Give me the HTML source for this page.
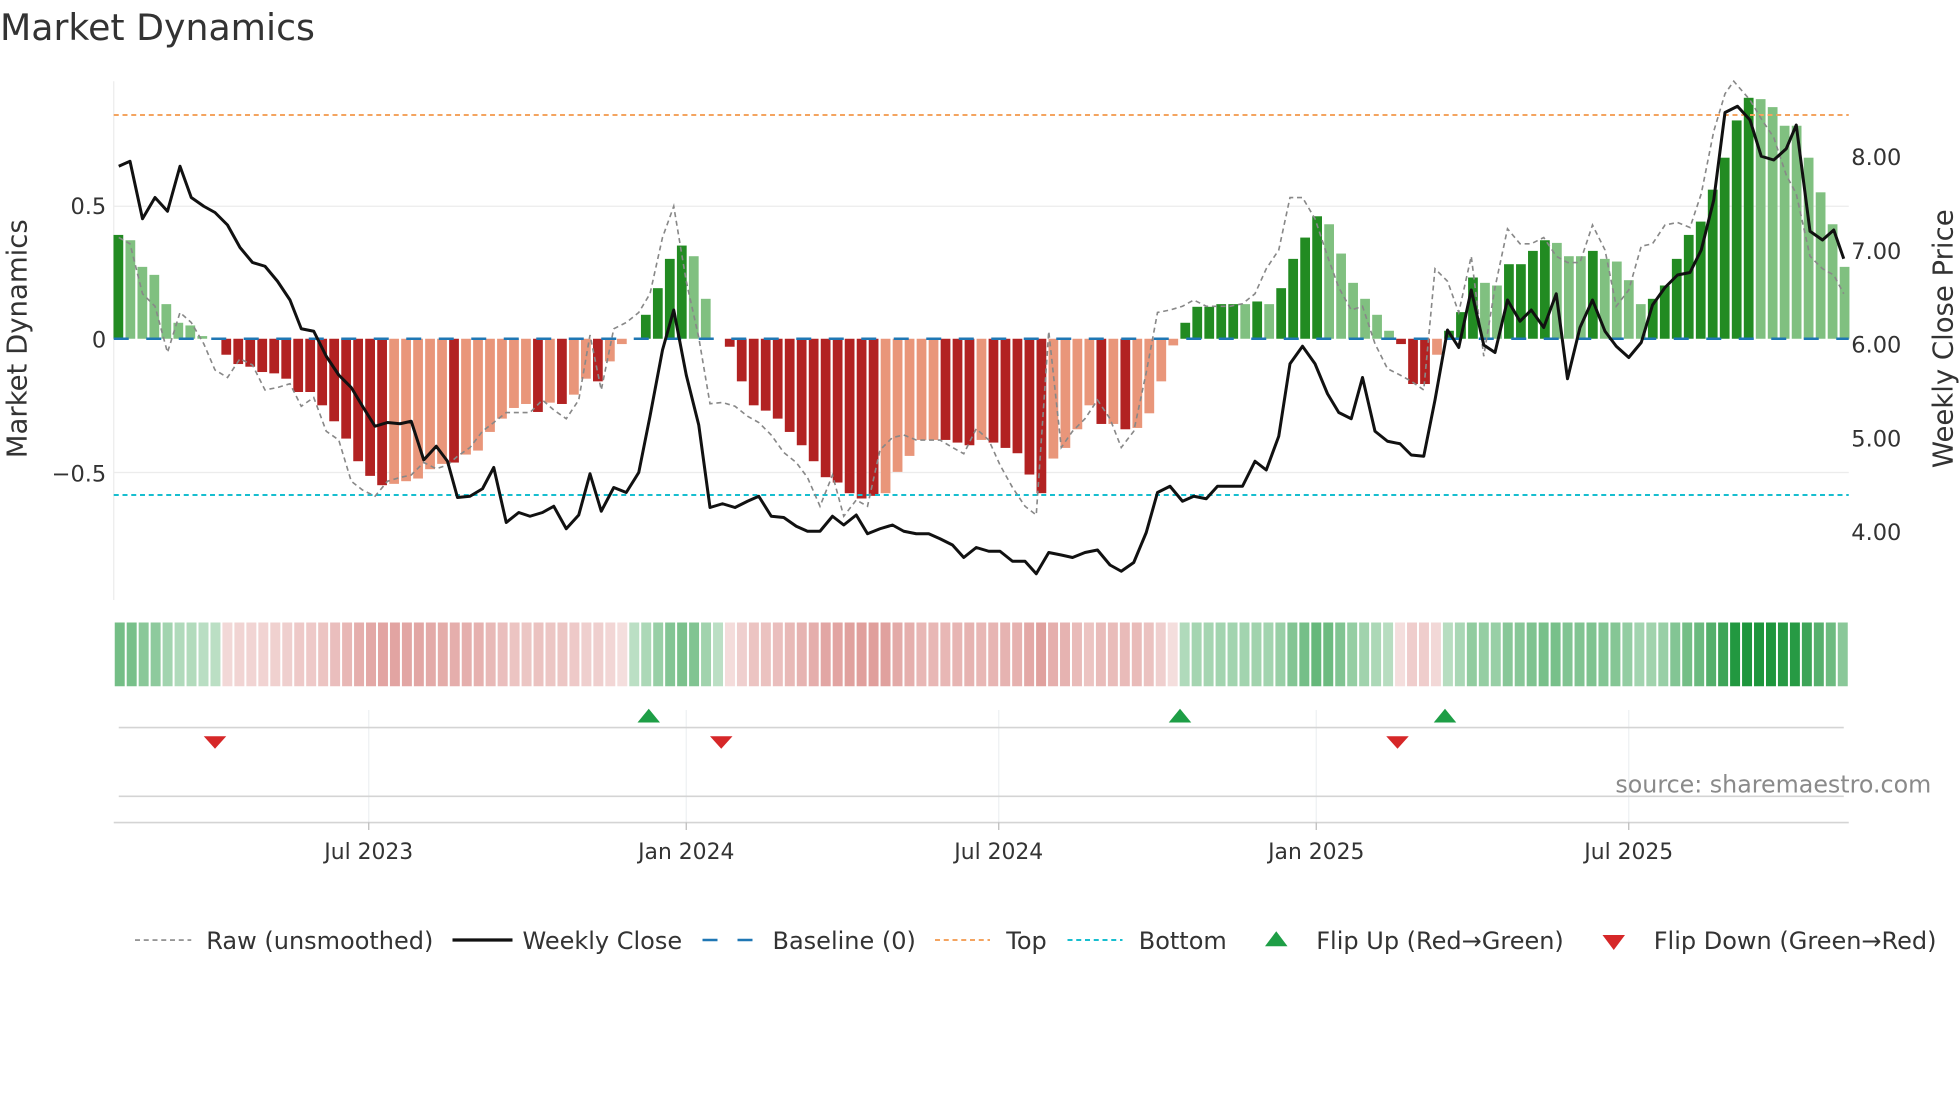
<!DOCTYPE html>
<html><head><meta charset="utf-8"><style>
html,body{margin:0;padding:0;background:#fff;width:1960px;height:1102px;overflow:hidden}
svg{display:block}
text{font-family:"DejaVu Sans","Liberation Sans",sans-serif;fill:#333}
</style></head><body>
<svg id="s" width="1960" height="1102" viewBox="0 0 1568 881.6" xmlns="http://www.w3.org/2000/svg">
<text x="0" y="32" font-size="29">Market Dynamics</text>
<line x1="91" y1="65" x2="91" y2="480" stroke="#ebebeb" stroke-width="1"/>
<line x1="91" y1="165" x2="1479" y2="165" stroke="#ececec" stroke-width="1"/>
<line x1="91" y1="378" x2="1479" y2="378" stroke="#ececec" stroke-width="1"/>
<g id="bars"></g>
<line x1="91" y1="271" x2="1479" y2="271" stroke="#1f77b4" stroke-width="2" stroke-dasharray="12,14"/>
<line x1="91" y1="92" x2="1479" y2="92" stroke="#f4a460" stroke-width="1.6" stroke-dasharray="4,3"/>
<line x1="91" y1="396" x2="1479" y2="396" stroke="#17becf" stroke-width="1.6" stroke-dasharray="4,3"/>
<polyline id="raw" fill="none" stroke="#888" stroke-width="1.3" stroke-dasharray="4,3"/>
<polyline id="px" fill="none" stroke="#111" stroke-width="2.4" stroke-linejoin="round"/>
<g font-size="18">
<text x="85" y="171" text-anchor="end">0.5</text>
<text x="85" y="278" text-anchor="end">0</text>
<text x="85" y="385" text-anchor="end">−0.5</text>
<text x="1481" y="132">8.00</text>
<text x="1481" y="207">7.00</text>
<text x="1481" y="282">6.00</text>
<text x="1481" y="357">5.00</text>
<text x="1481" y="432">4.00</text>
</g>
<text transform="translate(21,271) rotate(-90)" font-size="22" text-anchor="middle">Market Dynamics</text>
<text transform="translate(1562,271) rotate(-90)" font-size="22" text-anchor="middle">Weekly Close Price</text>
<g id="strip"></g>
<g stroke="#eef0f3" stroke-width="1">
<line x1="295" y1="568" x2="295" y2="658"/><line x1="549" y1="568" x2="549" y2="658"/><line x1="799" y1="568" x2="799" y2="658"/><line x1="1053" y1="568" x2="1053" y2="658"/><line x1="1303" y1="568" x2="1303" y2="658"/>
</g>
<line x1="95" y1="582" x2="1475" y2="582" stroke="#d4d4d4" stroke-width="1.3"/>
<line x1="95" y1="637" x2="1475" y2="637" stroke="#d4d4d4" stroke-width="1.3"/>
<line x1="91" y1="658" x2="1479" y2="658" stroke="#d4d4d4" stroke-width="1.3"/>
<g stroke="#bbb" stroke-width="1"><line x1="295" y1="658" x2="295" y2="664"/><line x1="549" y1="658" x2="549" y2="664"/><line x1="799" y1="658" x2="799" y2="664"/><line x1="1053" y1="658" x2="1053" y2="664"/><line x1="1303" y1="658" x2="1303" y2="664"/></g>
<g fill="#1e9e46">
<polygon points="510,578 528,578 519,567"/><polygon points="935,578 953,578 944,567"/><polygon points="1147,578 1165,578 1156,567"/>
</g>
<g fill="#d62728">
<polygon points="163,589 181,589 172,599"/><polygon points="568,589 586,589 577,599"/><polygon points="1109,589 1127,589 1118,599"/>
</g>
<text x="1545" y="634" font-size="19" text-anchor="end" style="fill:#8a8a8a">source: sharemaestro.com</text>
<g font-size="17.5" text-anchor="middle">
<text x="295" y="687">Jul 2023</text><text x="549" y="687">Jan 2024</text><text x="799" y="687">Jul 2024</text><text x="1053" y="687">Jan 2025</text><text x="1303" y="687">Jul 2025</text>
</g>
<g font-size="19.2">
<line x1="108" y1="752" x2="153" y2="752" stroke="#888" stroke-width="1.3" stroke-dasharray="4,3"/><text x="165" y="759">Raw (unsmoothed)</text>
<line x1="362" y1="752" x2="410" y2="752" stroke="#111" stroke-width="2.6"/><text x="418" y="759">Weekly Close</text>
<line x1="562" y1="752" x2="606" y2="752" stroke="#1f77b4" stroke-width="2" stroke-dasharray="12,16"/><text x="618" y="759">Baseline (0)</text>
<line x1="748" y1="752" x2="792" y2="752" stroke="#f4a460" stroke-width="1.6" stroke-dasharray="4,3"/><text x="805" y="759">Top</text>
<line x1="854" y1="752" x2="898" y2="752" stroke="#17becf" stroke-width="1.6" stroke-dasharray="4,3"/><text x="911" y="759">Bottom</text>
<polygon points="1012,757 1030,757 1021,745" fill="#1e9e46"/><text x="1053" y="759">Flip Up (Red→Green)</text>
<polygon points="1282,748 1300,748 1291,760" fill="#d62728"/><text x="1323" y="759">Flip Down (Green→Red)</text>
</g>
</svg>
<script>
var v=[.39,.37,.27,.24,.13,.06,.05,.01,0,-.06,-.095,-.105,-.125,-.13,-.15,-.2,-.2,-.25,-.31,-.375,-.46,-.515,-.55,-.545,-.535,-.525,-.49,-.47,-.465,-.435,-.42,-.35,-.3,-.26,-.245,-.275,-.24,-.245,-.21,-.15,-.16,-.085,-.02,0,.09,.19,.3,.35,.31,.15,0,
-.03,-.16,-.25,-.27,-.30,-.35,-.40,-.46,-.52,-.54,-.58,-.60,-.59,-.58,-.50,-.44,-.38,-.38,-.38,-.39,-.40,-.38,-.39,-.41,-.43,-.51,-.58,-.45,-.41,-.34,-.25,-.32,-.32,-.34,-.335,-.28,-.16,-.025,
.06,.12,.12,.13,.13,.13,.14,.13,.19,.30,.38,.46,.43,.32,.21,.15,.09,.03,
-.02,-.17,-.17,-.06,.03,.10,.23,.21,.20,.28,.28,.33,.37,.36,.31,.31,.33,.30,.29,.22,.13,.15,.20,.30,.39,.44,.56,.68,.82,.905,.90,.87,.80,.80,.68,.55,.43,.27];
var cd="DLLLLLLL."+"DDDDDDDDDDDDDD"+"LLLLL"+"D"+"LLLLLL"+"D"+"L"+"D"+"LL"+"D"+"LL"+"."+"DDDD"+"LL"+"."+
"DDDDDDDDDDDDD"+"LLLLL"+"DDD"+"L"+"DDDDD"+"LLLL"+"D"+"L"+"D"+"LLLL"+
"DDDDDLDLDDDDLLLLLL"+"DDDLDDDLLDDDDLLLDLLLLDDDDDDDDDLLLLLLLL";
var ns="http://www.w3.org/2000/svg",B=document.getElementById('bars'),S=document.getElementById('strip');
var w=9.59,n=v.length,ws=1388/n;
function el(t,a,p){var e=document.createElementNS(ns,t);for(var k in a)e.setAttribute(k,a[k]);p.appendChild(e);}
for(var i=0;i<n;i++){var cx=94.7+i*w,y=v[i],k=cd[i],c;
 if(y>=0)c=(k=='D')?'#228b22':'#80c080';else c=(k=='D')?'#b22222':'#e9967a';
 var h=Math.abs(y)*213;if(h>0)el('rect',{x:cx-3.9,y:y>=0?271-h:271,width:7.8,height:h,fill:c},B);
 var m=Math.min(1,Math.abs(y)/0.85),col;
 if(y>=0){var a=0.3+0.7*m;col='rgba(30,150,60,'+a.toFixed(2)+')';}else{var a=0.17+0.5*m;col='rgba(195,70,65,'+a.toFixed(2)+')';}
 el('rect',{x:91+i*ws+0.8,y:498,width:ws-1.6,height:51,fill:col},S);}
document.getElementById('px').setAttribute('points',"95,133 104,129 114,175 124,158 134,169 144,133 153,158 163,165 172,170 182,180 192,198 202,210 212,213 222,225 232,240 241,263 251,265 261,285 271,300 281,310 290,325 300,341 310,338 320,339 329,337 339,368 349,357 358,369 366,398 376,397 386,391 395,374 405,418 415,410 424,413 434,410 443,405 453,423 463,412 472,379 481,409 491,390 501,394 511,378 520,333 530,280 539,248 549,300 559,340 568,406 578,403 588,406 598,401 607,397 617,413 627,414 637,421 646,425 656,425 666,413 675,420 685,412 694,427 704,423 714,420 723,425 733,427 743,427 752,431 762,436 771,446 781,438 791,441 800,441 810,449 820,449 829,459 839,442 849,444 858,446 868,442 878,440 888,452 897,457 907,450 917,426 926,394 936,389 946,401 955,397 965,399 974,389 984,389 994,389 1004,369 1013,376 1023,349 1032,291 1042,277 1052,291 1062,315 1071,330 1081,335 1090,302 1100,345 1110,353 1120,355 1129,364 1139,365 1148,320 1158,264 1167,278 1177,232 1187,276 1196,282 1206,240 1216,257 1225,248 1235,262 1245,235 1254,303 1264,262 1274,240 1284,265 1293,277 1303,286 1313,274 1322,244 1332,230 1342,220 1352,218 1361,200 1371,160 1380,90 1390,85 1400,96 1409,125 1419,128 1429,119 1437,100 1448,185 1458,192 1467,184 1475,207");
document.getElementById('raw').setAttribute('points',"95,190 104,195 114,235 124,245 134,282 144,250 153,258 163,275 172,296 182,302 192,287 202,292 212,312 222,310 232,307 241,325 251,318 261,345 271,352 281,385 290,392 300,397 310,385 320,382 329,380 339,370 349,375 358,372 366,365 376,358 386,345 395,338 405,330 415,330 424,330 434,320 443,328 453,335 463,320 472,268 481,312 491,263 501,258 511,250 520,235 530,190 539,165 549,225 559,270 568,323 578,322 588,325 598,333 607,338 617,348 627,362 637,370 646,382 656,405 666,380 675,413 685,400 694,405 704,360 714,350 723,348 733,352 743,352 752,352 762,358 771,363 781,343 791,352 800,372 810,390 820,405 829,412 839,265 849,358 858,345 868,335 878,320 888,335 897,358 907,345 917,298 926,250 936,248 946,245 955,240 965,245 974,245 984,245 994,243 1004,235 1013,215 1023,200 1032,158 1042,158 1052,175 1062,205 1071,230 1081,248 1090,245 1100,275 1110,295 1120,300 1129,305 1139,312 1148,215 1158,225 1167,250 1177,205 1187,285 1196,230 1206,183 1216,195 1225,195 1235,190 1245,205 1254,210 1264,210 1274,180 1284,200 1293,245 1303,232 1313,197 1322,195 1332,180 1342,178 1352,182 1361,155 1371,105 1380,75 1387,65 1400,80 1409,95 1419,110 1429,140 1437,155 1448,205 1458,215 1467,220 1475,235");
</script>
</body></html>
